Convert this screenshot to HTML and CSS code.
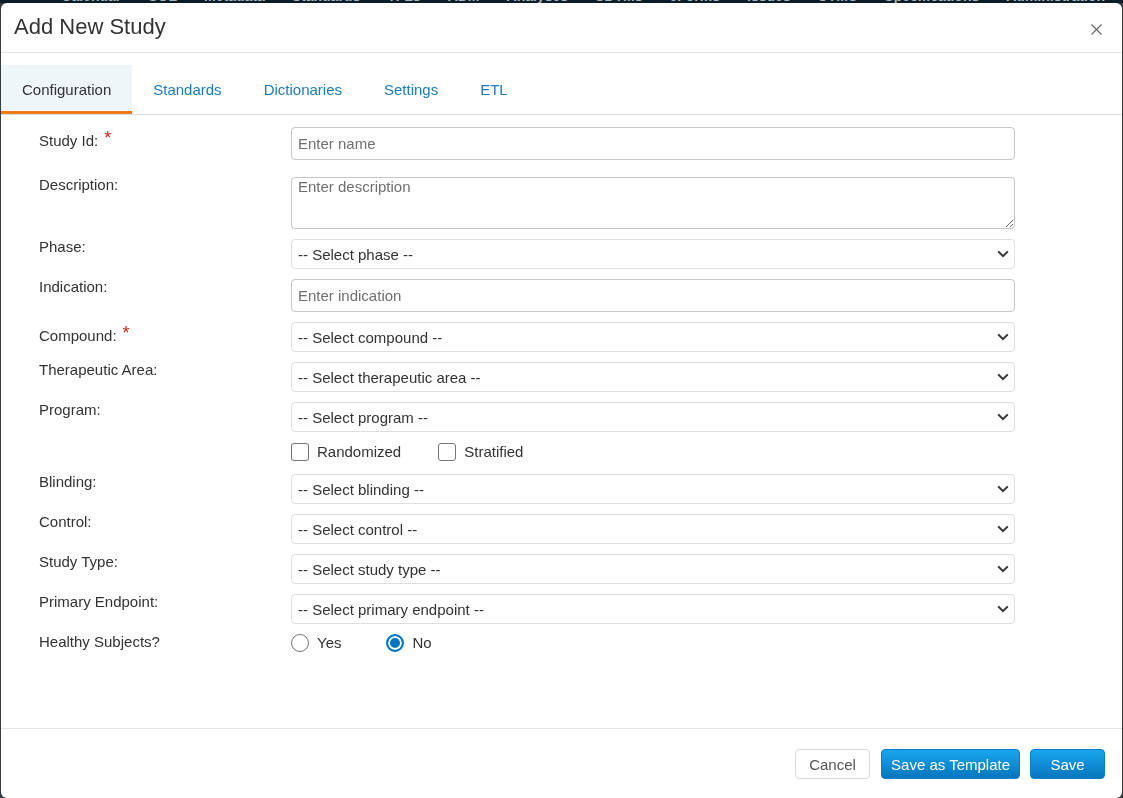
FILE: index.html
```html
<!DOCTYPE html>
<html lang="en">
<head>
  <meta charset="UTF-8" />
  <title>Add New Study</title>
  <link rel="stylesheet" href="styles.css">
</head>
<body>

  <!-- page behind the dialog -->
  <nav class="topnav">
    <span>Calendar</span>
    <span>SOL</span>
    <span>Metadata</span>
    <span>Standards</span>
    <span>TFLs</span>
    <span>ADM</span>
    <span>Analyses</span>
    <span>SDTMs</span>
    <span>eForms</span>
    <span>Issues</span>
    <span>UTMS</span>
    <span>Specifications</span>
    <span>Administration</span>
  </nav>

  <!-- Add New Study dialog -->
  <div class="modal">
    <div class="modal-header">
      <h1 class="modal-title">Add New Study</h1>
      <button class="close-btn" type="button" aria-label="Close">
        <svg width="11" height="11" viewBox="0 0 11 11"><path d="M0.5 0.5L10.5 10.5M10.5 0.5L0.5 10.5" stroke="#666" stroke-width="1.1" fill="none"/></svg>
      </button>
    </div>

    <ul class="tabs">
      <li class="active">Configuration</li>
      <li>Standards</li>
      <li>Dictionaries</li>
      <li>Settings</li>
      <li>ETL</li>
    </ul>

    <form class="modal-body">
      <div class="row">
        <label class="field-label required">Study Id:<span class="req">*</span></label>
        <input class="field" type="text" placeholder="Enter name" />
      </div>

      <div class="row desc-row">
        <label class="field-label">Description:</label>
        <textarea class="field area" placeholder="Enter description"></textarea>
      </div>

      <div class="row">
        <label class="field-label">Phase:</label>
        <div class="select-wrap">
          <select class="field select"><option>-- Select phase --</option></select>
          <svg class="chevron" width="12" height="8" viewBox="0 0 12 8"><path d="M1.2 1.4L6 6.2L10.8 1.4" stroke="#333" stroke-width="2" fill="none"/></svg>
        </div>
      </div>

      <div class="row">
        <label class="field-label">Indication:</label>
        <input class="field" type="text" placeholder="Enter indication" />
      </div>

      <div class="row">
        <label class="field-label required">Compound:<span class="req">*</span></label>
        <div class="select-wrap">
          <select class="field select"><option>-- Select compound --</option></select>
          <svg class="chevron" width="12" height="8" viewBox="0 0 12 8"><path d="M1.2 1.4L6 6.2L10.8 1.4" stroke="#333" stroke-width="2" fill="none"/></svg>
        </div>
      </div>

      <div class="row">
        <label class="field-label">Therapeutic Area:</label>
        <div class="select-wrap">
          <select class="field select"><option>-- Select therapeutic area --</option></select>
          <svg class="chevron" width="12" height="8" viewBox="0 0 12 8"><path d="M1.2 1.4L6 6.2L10.8 1.4" stroke="#333" stroke-width="2" fill="none"/></svg>
        </div>
      </div>

      <div class="row">
        <label class="field-label">Program:</label>
        <div class="select-wrap">
          <select class="field select"><option>-- Select program --</option></select>
          <svg class="chevron" width="12" height="8" viewBox="0 0 12 8"><path d="M1.2 1.4L6 6.2L10.8 1.4" stroke="#333" stroke-width="2" fill="none"/></svg>
        </div>
      </div>

      <div class="row options-row">
        <div class="field-label"></div>
        <label class="choice check-choice"><input type="checkbox" class="check" />Randomized</label>
        <label class="choice check-choice"><input type="checkbox" class="check" />Stratified</label>
      </div>

      <div class="row">
        <label class="field-label">Blinding:</label>
        <div class="select-wrap">
          <select class="field select"><option>-- Select blinding --</option></select>
          <svg class="chevron" width="12" height="8" viewBox="0 0 12 8"><path d="M1.2 1.4L6 6.2L10.8 1.4" stroke="#333" stroke-width="2" fill="none"/></svg>
        </div>
      </div>

      <div class="row">
        <label class="field-label">Control:</label>
        <div class="select-wrap">
          <select class="field select"><option>-- Select control --</option></select>
          <svg class="chevron" width="12" height="8" viewBox="0 0 12 8"><path d="M1.2 1.4L6 6.2L10.8 1.4" stroke="#333" stroke-width="2" fill="none"/></svg>
        </div>
      </div>

      <div class="row">
        <label class="field-label">Study Type:</label>
        <div class="select-wrap">
          <select class="field select"><option>-- Select study type --</option></select>
          <svg class="chevron" width="12" height="8" viewBox="0 0 12 8"><path d="M1.2 1.4L6 6.2L10.8 1.4" stroke="#333" stroke-width="2" fill="none"/></svg>
        </div>
      </div>

      <div class="row">
        <label class="field-label">Primary Endpoint:</label>
        <div class="select-wrap">
          <select class="field select"><option>-- Select primary endpoint --</option></select>
          <svg class="chevron" width="12" height="8" viewBox="0 0 12 8"><path d="M1.2 1.4L6 6.2L10.8 1.4" stroke="#333" stroke-width="2" fill="none"/></svg>
        </div>
      </div>

      <div class="row">
        <label class="field-label">Healthy Subjects?</label>
        <label class="choice radio-choice"><input type="radio" name="healthy" class="radio" />Yes</label>
        <label class="choice radio-choice"><input type="radio" name="healthy" class="radio" checked />No</label>
      </div>
    </form>

    <div class="modal-footer">
      <button type="button" class="btn btn-default">Cancel</button>
      <button type="button" class="btn btn-primary">Save as Template</button>
      <button type="button" class="btn btn-primary">Save</button>
    </div>
  </div>

</body>
</html>
```

FILE: styles.css
```css
* {
  box-sizing: border-box;
}

body {
  margin: 0;
  height: 100vh;
  overflow: hidden;
  font-family: "Liberation Sans", Arial, sans-serif;
  background: #3a3d40;
}

/* page nav, almost fully hidden by the dialog */
.topnav {
  display: flex;
  justify-content: flex-end;
  gap: 27px;
  height: 14px;
  margin-top: -11px;
  padding-right: 18px;
  line-height: 14px;
  font-size: 14px;
  font-weight: bold;
  color: #a9b6bf;
  background: #0b1d28;
  white-space: nowrap;
}

.modal {
  position: fixed;
  top: 3px;
  left: 1px;
  right: 1px;
  bottom: 0;
  display: flex;
  flex-direction: column;
  background: #fff;
  border-radius: 6px;
  overflow: hidden;
}

.modal-header {
  display: flex;
  align-items: center;
  justify-content: space-between;
  height: 50px;
  padding: 0 20px 1px 13px;
  border-bottom: 1px solid #e5e5e5;
}

.modal-title {
  margin: 0;
  font-size: 22px;
  font-weight: normal;
  line-height: 26px;
  color: #333;
}

.close-btn {
  display: flex;
  margin-top: 5px;
  padding: 0;
  background: none;
  border: none;
  cursor: pointer;
}

.tabs {
  display: flex;
  list-style: none;
  margin: 0;
  padding: 12px 0 0;
  border-bottom: 1px solid #dedede;
}

.tabs li {
  padding: 15px 21px 11px;
  font-size: 15px;
  line-height: 20px;
  color: #1c7cc0;
  border-bottom: 3px solid transparent;
  cursor: pointer;
}

.tabs li.active {
  color: #333;
  background: #eef6fa;
  border-bottom-color: #f07a14;
}

.modal-body {
  flex: 1;
  margin: 0;
  padding: 12px 0 0 38px;
}

.row {
  display: flex;
  margin-bottom: 10px;
}

.desc-row {
  margin-top: 17px;
}

.field-label {
  flex-shrink: 0;
  width: 252px;
  font-size: 15px;
  line-height: 16px;
  color: #333;
}

.field-label.required {
  padding-top: 6px;
}

.req {
  margin-left: 6px;
  font-size: 18px;
  line-height: 0;
  vertical-align: 2px;
  color: #e31c1c;
}

.field {
  width: 724px;
  height: 33px;
  padding: 0 6px;
  font-family: "Liberation Sans", Arial, sans-serif;
  font-size: 15px;
  color: #333;
  background: #fff;
  border: 1px solid #c6c6c6;
  border-radius: 4px;
  outline: none;
}

.field::placeholder {
  color: #707070;
}

.area {
  height: 52px;
  padding: 1px 6px;
  line-height: 16px;
  resize: vertical;
}

.select-wrap {
  position: relative;
}

.select {
  height: 30px;
  appearance: none;
  border-color: #dedede;
}

.chevron {
  position: absolute;
  right: 6px;
  top: 11px;
  pointer-events: none;
}

.options-row {
  height: 20px;
  margin-bottom: 12px;
  align-items: center;
}

.choice {
  display: flex;
  align-items: center;
  gap: 8px;
  font-size: 15px;
  line-height: 18px;
  color: #333;
}

.check-choice {
  margin-right: 37px;
}

.radio-choice {
  margin-right: 45px;
}

.check,
.radio {
  appearance: none;
  width: 18px;
  height: 18px;
  margin: 0;
  background: #fff;
  border: 1px solid #767676;
}

.check {
  border-radius: 3px;
}

.radio {
  border-radius: 50%;
}

.radio:checked {
  background: #0075c4;
  border: 2px solid #0075c4;
  box-shadow: inset 0 0 0 2px #fff;
}

.modal-footer {
  display: flex;
  justify-content: flex-end;
  align-items: flex-start;
  gap: 10px;
  height: 70px;
  padding: 20px 17px 0;
  border-top: 1px solid #e5e5e5;
}

.btn {
  min-width: 75px;
  height: 30px;
  padding: 0 9px;
  font-family: "Liberation Sans", Arial, sans-serif;
  font-size: 15px;
  border-radius: 4px;
  cursor: pointer;
}

.btn-default {
  margin-right: 1px;
  color: #555;
  background: #fff;
  border: 1px solid #d9d9d9;
}

.btn-primary {
  color: #fff;
  background: linear-gradient(#19a6ee, #0576bd);
  border: 1px solid #0a7cc4;
}
```
